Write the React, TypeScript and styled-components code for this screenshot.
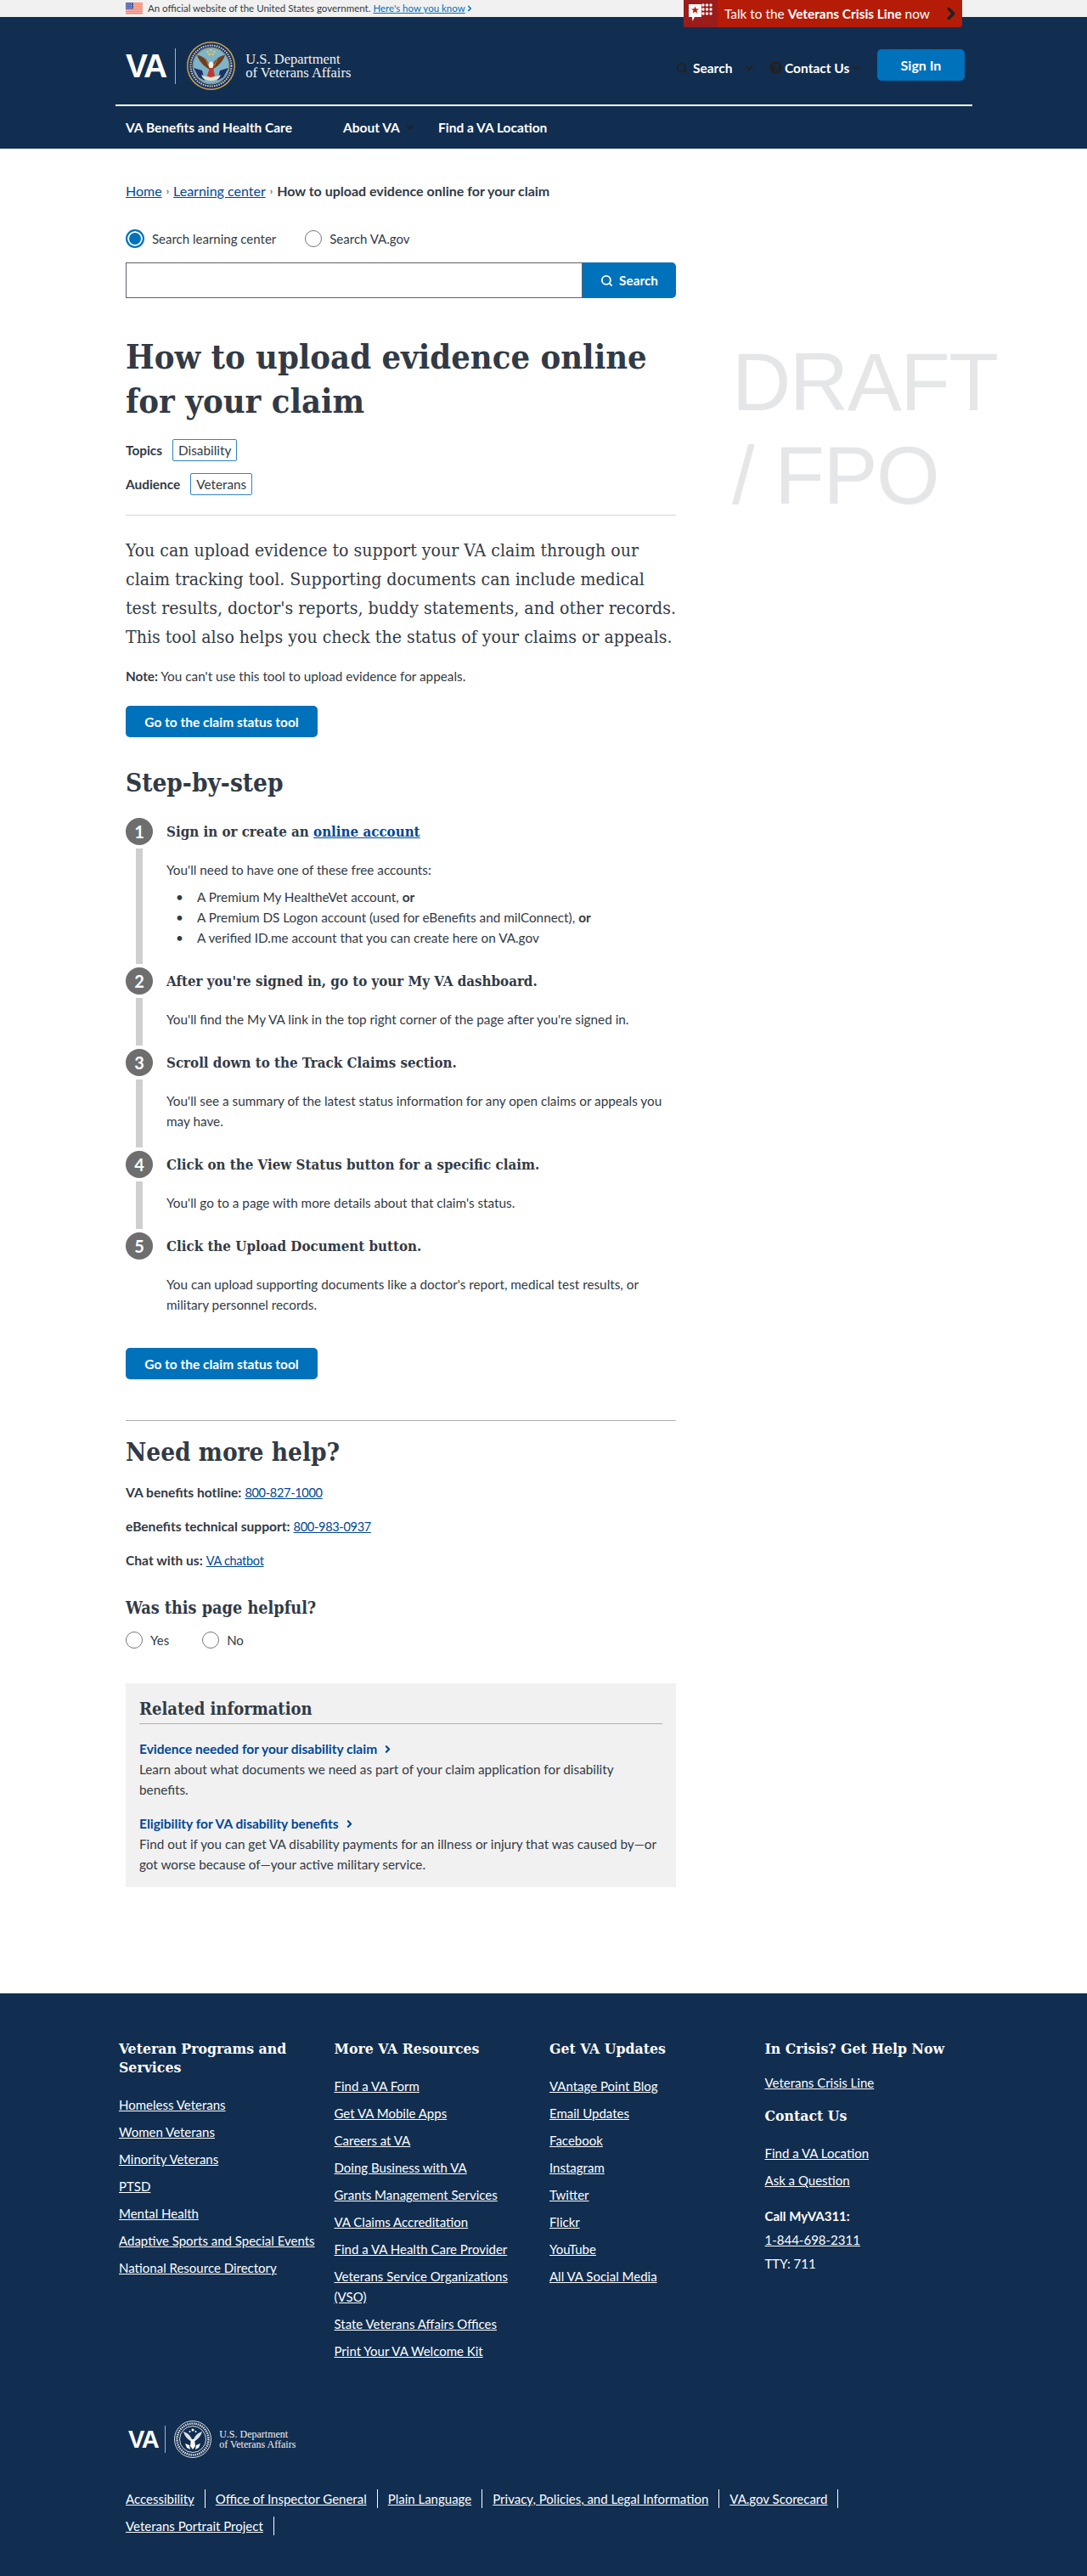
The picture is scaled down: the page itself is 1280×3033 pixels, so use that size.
import styled, { createGlobalStyle } from 'styled-components';
import { Search, ChevronDown, ChevronRight } from 'lucide-react';
import { FaQuestionCircle } from 'react-icons/fa';

const sans = `Lato, "Open Sans", sans-serif`;
const slab = `"DejaVu Serif Condensed", "DejaVu Serif", serif`;

const GlobalStyle = createGlobalStyle`
  body {
    margin: 0;
    background: #fff;
    color: #323a45;
    font-family: ${sans};
    font-size: 15.3px;
    line-height: 24px;
  }
  * { box-sizing: border-box; }
  p, h1, h2, h3, h4, ul { margin: 0; padding: 0; }
`;

const GovBanner = styled.div`
  position: relative;
  height: 20px;
  background: #f1f1f1;
  padding-left: 148px;
  display: flex;
  align-items: center;
  gap: 6px;
  font-size: 11.5px;
  line-height: 20px;
`;

const BannerLink = styled.a`
  color: #0071bb;
  text-decoration: underline;
  display: inline-flex;
  align-items: center;
  margin-left: -3px;
`;

const CrisisLine = styled.div`
  position: absolute;
  z-index: 2;
  top: 0;
  left: 805px;
  width: 328px;
  height: 32px;
  display: flex;
  align-items: center;
  background: #b51c08;
  color: #fff;
  font-size: 15.4px;
  border-radius: 0 0 3px 3px;
  overflow: hidden;

  svg.chev { color: #212121; margin-left: 14px; }
  b { font-weight: 700; }
`;

const CrisisBadge = styled.div`
  width: 40px;
  height: 32px;
  margin-right: 8px;
  background: #9b1c1c;
  display: flex;
  align-items: center;
  justify-content: center;
`;

const Masthead = styled.header`
  background: #112e51;
  height: 155px;
  color: #fff;
`;

const MastInner = styled.div`
  width: 1009px;
  margin-left: 136px;
`;

const TopRow = styled.div`
  height: 105px;
  padding: 29px 9px 0 12px;
  display: flex;
  justify-content: space-between;
  align-items: flex-start;
  border-bottom: 2px solid #fff;
`;

const LogoRow = styled.div<{ $small?: boolean }>`
  display: flex;
  align-items: center;
  height: ${(p) => (p.$small ? 44 : 57)}px;
`;

const VaMark = styled.span<{ $small?: boolean }>`
  font-family: "Liberation Sans", sans-serif;
  font-weight: 700;
  font-size: ${(p) => (p.$small ? 29 : 39)}px;
  letter-spacing: ${(p) => (p.$small ? -1.5 : -2)}px;
  line-height: 1;
  color: #fff;
`;

const LogoDivider = styled.span<{ $small?: boolean }>`
  width: 1px;
  height: ${(p) => (p.$small ? 32 : 42)}px;
  background: #aeb0b5;
  margin: 0 ${(p) => (p.$small ? 10 : 13)}px 0 ${(p) => (p.$small ? 8 : 11)}px;
`;

const LogoText = styled.div<{ $small?: boolean }>`
  font-family: "Liberation Serif", serif;
  font-size: ${(p) => (p.$small ? 12 : 16.5)}px;
  line-height: ${(p) => (p.$small ? 12 : 16)}px;
  color: #f1f1f1;
  margin-left: ${(p) => (p.$small ? 9 : 12)}px;
`;

const Utility = styled.div`
  display: flex;
  align-items: flex-start;
  margin-top: 9px;
`;

const UtilityItem = styled.div<{ $width: number }>`
  width: ${(p) => p.$width}px;
  height: 37px;
  padding-top: 6px;
  display: flex;
  align-items: center;
  font-weight: 700;
  font-size: 15.5px;
  color: #fff;
  white-space: nowrap;

  svg { color: #212121; flex: none; }
`;

const SearchIconLead = styled(Search)`
  margin-right: 6px;
`;

const ChevronTrail = styled(ChevronDown)<{ $left: number }>`
  margin-left: ${(p) => p.$left}px;
`;

const HelpIcon = styled(FaQuestionCircle)`
  margin-right: 3px;
`;

const SignIn = styled.a`
  width: 103px;
  height: 37px;
  margin-left: 22px;
  background: #0071bb;
  border-radius: 5px;
  color: #fff;
  font-weight: 700;
  font-size: 16px;
  display: flex;
  align-items: center;
  justify-content: center;
`;

const NavRow = styled.nav`
  height: 50px;
  padding-left: 12px;
  display: flex;
  align-items: center;
  font-weight: 700;
  font-size: 15.5px;
`;

const NavItem = styled.a<{ $width: number }>`
  width: ${(p) => p.$width}px;
  color: #fff;
  display: flex;
  align-items: center;
  svg { color: #212121; margin-left: 5px; }
`;

const Layout = styled.div`
  display: flex;
  padding-left: 148px;
`;

const Content = styled.main`
  width: 648px;
  padding-top: 38px;
`;

const Aside = styled.aside`
  width: 340px;
  margin: 220px 0 0 66px;
  font-family: "Liberation Sans", sans-serif;
  font-size: 96px;
  line-height: 110.4px;
  letter-spacing: -1.5px;
  color: #e5e6e8;
`;

const Breadcrumb = styled.div`
  display: flex;
  align-items: center;
  height: 24px;
  font-size: 16px;
  a { color: #004795; text-decoration: underline; }
  b { font-weight: 700; }
`;

const CrumbSep = styled.span`
  font-size: 12px;
  color: #323a45;
  padding: 0 5px;
`;

const RadioRow = styled.div<{ $gap: number; $top?: number }>`
  display: flex;
  align-items: center;
  gap: ${(p) => p.$gap}px;
  height: 24px;
  margin-top: ${(p) => p.$top ?? 0}px;
  font-size: 15px;
`;

const RadioWrap = styled.label`
  display: flex;
  align-items: center;
  gap: 9px;
`;

const RadioMark = styled.span<{ $checked?: boolean }>`
  width: ${(p) => (p.$checked ? 22 : 20)}px;
  height: ${(p) => (p.$checked ? 22 : 20)}px;
  border-radius: 50%;
  background: ${(p) => (p.$checked ? '#0071bb' : '#fff')};
  border: ${(p) => (p.$checked ? '2px solid #0071bb' : '1px solid #757575')};
  box-shadow: ${(p) => (p.$checked ? 'inset 0 0 0 2px #fff' : 'none')};
`;

const SearchRow = styled.div`
  display: flex;
  height: 42px;
  margin-top: 16px;
`;

const SearchInput = styled.div`
  width: 538px;
  border: 1.5px solid #5b616b;
`;

const SearchButton = styled.div`
  width: 110px;
  background: #0071bb;
  border-radius: 0 5px 5px 0;
  color: #fff;
  font-weight: 700;
  display: flex;
  align-items: center;
  justify-content: center;
  gap: 7px;
`;

const Title = styled.h1`
  font-family: ${slab};
  font-weight: 700;
  font-size: 39.6px;
  line-height: 52px;
  margin-top: 43px;
`;

const TagRow = styled.div<{ $top: number }>`
  display: flex;
  align-items: center;
  gap: 12px;
  margin-top: ${(p) => p.$top}px;
  font-size: 15.4px;
  b { font-weight: 700; }
`;

const Tag = styled.span`
  height: 26px;
  padding: 0 6px;
  border: 1px solid #2e85c7;
  border-radius: 2px;
  line-height: 24px;
  font-size: 15.3px;
`;

const Rule = styled.hr<{ $top: number; $color: string }>`
  border: 0;
  height: 1px;
  margin: ${(p) => p.$top}px 0 0;
  background: ${(p) => p.$color};
`;

const Lead = styled.p`
  font-family: ${slab};
  font-size: 21.1px;
  line-height: 34px;
  margin-top: 24px;
`;

const Note = styled.p`
  margin-top: 17px;
  b { font-weight: 700; }
`;

const PrimaryButton = styled.a<{ $top: number }>`
  display: flex;
  align-items: center;
  justify-content: center;
  width: 226px;
  height: 37px;
  margin-top: ${(p) => p.$top}px;
  background: #0071bb;
  border-radius: 5px;
  color: #fff;
  font-weight: 700;
  font-size: 15.5px;
`;

const SectionTitle = styled.h2<{ $top: number }>`
  font-family: ${slab};
  font-weight: 700;
  font-size: 29.5px;
  line-height: 42px;
  margin-top: ${(p) => p.$top}px;
`;

const Steps = styled.ol`
  list-style: none;
  margin: 20px 0 0;
  padding: 0;
`;

const Step = styled.li`
  display: flex;
  gap: 16px;
`;

const StepRail = styled.div`
  width: 32px;
  flex: none;
  display: flex;
  flex-direction: column;
  align-items: center;
`;

const StepNumber = styled.span`
  width: 32px;
  height: 32px;
  flex: none;
  border-radius: 50%;
  background: #6e6e6e;
  color: #fff;
  font-weight: 700;
  font-size: 20px;
  line-height: 32px;
  text-align: center;
`;

const StepBar = styled.span`
  flex: 1;
  width: 8px;
  margin: 4px 0;
  background: #cfcfcf;
`;

const StepBody = styled.div`
  flex: 1;
  padding-bottom: 23px;
`;

const StepTitle = styled.h3`
  font-family: ${slab};
  font-weight: 700;
  font-size: 16.8px;
  line-height: 32px;
  margin-bottom: 17px;
  a { color: #004795; text-decoration: underline; }
`;

const Bullets = styled.ul`
  list-style: none;
  margin-top: 8px;
  li { display: flex; }
  li::before {
    content: '•';
    width: 25px;
    padding-left: 11px;
    flex: none;
  }
  b { font-weight: 700; margin-left: 4px; }
`;

const HelpRow = styled.p<{ $top: number }>`
  margin-top: ${(p) => p.$top}px;
  font-size: 15.6px;
  b { font-weight: 700; }
  a {
    color: #004795;
    text-decoration: underline;
    font-size: 14.5px;
    line-height: 1;
    letter-spacing: -0.3px;
  }
`;

const HelpfulTitle = styled.h3`
  font-family: ${slab};
  font-weight: 700;
  font-size: 19.7px;
  line-height: 31px;
  margin: 29px 0 10px;
`;

const Related = styled.section`
  background: #f1f1f1;
  margin-top: 39px;
  padding: 15px 16px;
`;

const RelatedTitle = styled.h3`
  font-family: ${slab};
  font-weight: 700;
  font-size: 20px;
  line-height: 31px;
  padding-bottom: 1px;
  border-bottom: 1px solid #aeb0b5;
  margin-bottom: 17px;
`;

const RelatedLink = styled.a<{ $top?: number }>`
  display: flex;
  align-items: center;
  gap: 6px;
  margin-top: ${(p) => p.$top ?? 0}px;
  color: #004795;
  font-weight: 700;
  font-size: 15.5px;
`;

const Footer = styled.footer`
  margin-top: 125px;
  background: #112e51;
  color: #fff;
  padding: 54px 0 47px 140px;
  font-size: 15px;
`;

const FooterColumns = styled.div`
  display: grid;
  grid-template-columns: repeat(4, 233.5px);
  column-gap: 20px;
  height: 449px;
`;

const FooterTitle = styled.h4<{ $top?: number; $bottom?: number }>`
  font-family: ${slab};
  font-weight: 700;
  font-size: 17.5px;
  line-height: 22px;
  margin-top: ${(p) => p.$top ?? 0}px;
  margin-bottom: ${(p) => p.$bottom ?? 21}px;
`;

const FooterList = styled.ul`
  list-style: none;
  li { margin-bottom: 8px; }
  a { color: #fff; text-decoration: underline; }
`;

const FooterText = styled.p<{ $top: number }>`
  margin-top: ${(p) => p.$top}px;
  a { color: #fff; text-decoration: underline; }
  b { font-weight: 700; }
`;

const FooterLogo = styled.div`
  padding-left: 11px;
`;

const PolicyLinks = styled.ul`
  list-style: none;
  display: flex;
  flex-wrap: wrap;
  width: 1000px;
  margin: 36px 0 0 8px;
  row-gap: 8px;

  li {
    display: flex;
    align-items: center;
    line-height: 24px;
  }
  li::after {
    content: '';
    width: 1px;
    height: 22px;
    margin: 0 12px;
    background: #fff;
  }
  a { color: #fff; text-decoration: underline; }
`;

const Flag = () => (
  <svg width="20" height="14" viewBox="0 0 20 14">
    <rect width="20" height="14" fill="#fff" />
    {[0, 2, 4, 6, 8, 10, 12].map((y) => (
      <rect key={y} y={y} width="20" height="1.6" fill="#f08a72" />
    ))}
    <rect width="9" height="7.5" fill="#4d5fa8" />
    {[1.5, 3.5, 5.5].map((y) =>
      [1.5, 4, 6.5].map((x) => <circle key={`${x}-${y}`} cx={x} cy={y} r="0.6" fill="#dfe3f2" />)
    )}
  </svg>
);

const CrisisIcon = () => (
  <svg width="30" height="26" viewBox="0 0 30 26">
    <path d="M1 2h15v15h-8l-2.5 5L5 17H1z" fill="#fff" />
    <path d="M8.5 4.5l1.3 3h3.2l-2.6 2 1 3.2-2.9-2-2.9 2 1-3.2-2.6-2h3.2z" fill="#b51c08" />
    {[3, 8, 13].map((y) =>
      [18, 22.5, 27].map((x) => <circle key={`${x}-${y}`} cx={x} cy={y} r="1.7" fill="#fff" />)
    )}
  </svg>
);

const Seal = () => (
  <svg width="57" height="57" viewBox="0 0 57 57">
    <circle cx="28.5" cy="28.5" r="28.5" fill="#c9a24a" />
    <circle cx="28.5" cy="28.5" r="27" fill="#17305f" />
    <circle cx="28.5" cy="28.5" r="21.5" fill="none" stroke="#c9a24a" strokeWidth="1" />
    <circle cx="28.5" cy="28.5" r="24" fill="none" stroke="#cfd3dc" strokeWidth="2" strokeDasharray="1.5 1.2" />
    <circle cx="28.5" cy="28.5" r="21" fill="#7db4c9" />
    <path d="M8 31l10 3 3 12-7-4z" fill="#1d2f66" />
    <path d="M49 31l-10 3-3 12 7-4z" fill="#1d2f66" />
    <path d="M27 33C22 30 15 25 12 16c4 0 6 2 8 3 4 3 7 7 8 12z" fill="#6e3f1e" />
    <path d="M30 33c5-3 12-8 15-17-4 0-6 2-8 3-4 3-7 7-8 12z" fill="#6e3f1e" />
    <path d="M22 20l4 9M36 20l-4 9" stroke="#a86f3a" strokeWidth="1.4" />
    <path d="M25.5 27c0-2 1.5-3.5 3-3.5s3 1.5 3 3.5l-1 4h-4z" fill="#f4f1e6" />
    <path d="M27 31h4l2 9-4.5 3-4.5-3z" fill="#c8352b" />
    <path d="M17 39c4 2 8 3 11 3s8-1 12-3l-2 4c-3 2-6 3-9.5 3s-7-1-9.5-3z" fill="#e9e2d2" />
    {[[28.5, 10], [24.5, 12], [32.5, 12], [26.5, 15], [30.5, 15]].map(([x, y]) => (
      <circle key={`${x}-${y}`} cx={x} cy={y} r="1.3" fill="#e8c65a" />
    ))}
  </svg>
);

const SealWhite = () => (
  <svg width="44" height="44" viewBox="0 0 44 44">
    <circle cx="22" cy="22" r="21.5" fill="#112e51" stroke="#dfe1e2" />
    <circle cx="22" cy="22" r="18.5" fill="none" stroke="#dfe1e2" strokeWidth="2.5" strokeDasharray="1.5 1" />
    <circle cx="22" cy="22" r="15.5" fill="none" stroke="#dfe1e2" />
    <path d="M21 25C17 23 12 18 11 13c4 1 8 4 10 9zM23 25c4-2 9-7 10-12-4 1-8 4-10 9z" fill="#dfe1e2" />
    <path d="M20 22h4l1 8-3 4-3-4zM13 27l5 2 1 5-4-2zM31 27l-5 2-1 5 4-2z" fill="#fff" />
    <circle cx="22" cy="11" r="1.5" fill="#fff" />
    <circle cx="18.5" cy="13" r="1" fill="#fff" />
    <circle cx="25.5" cy="13" r="1" fill="#fff" />
  </svg>
);

const App = () => {
  return (
    <>
      <GlobalStyle />
      <GovBanner>
        <Flag />
        <span>An official website of the United States government.</span>
        <BannerLink>
          Here's how you know
          <ChevronRight size={10} strokeWidth={4} />
        </BannerLink>
        <CrisisLine>
          <CrisisBadge>
            <CrisisIcon />
          </CrisisBadge>
          <span>
            Talk to the <b>Veterans Crisis Line</b> now
          </span>
          <ChevronRight className="chev" size={22} strokeWidth={4} />
        </CrisisLine>
      </GovBanner>

      <Masthead>
        <MastInner>
          <TopRow>
            <LogoRow>
              <VaMark>VA</VaMark>
              <LogoDivider />
              <Seal />
              <LogoText>
                U.S. Department
                <br />
                of Veterans Affairs
              </LogoText>
            </LogoRow>
            <Utility>
              <UtilityItem $width={110}>
                <SearchIconLead size={14} strokeWidth={3} />
                Search
                <ChevronTrail $left={12} size={16} strokeWidth={3} />
              </UtilityItem>
              <UtilityItem $width={105}>
                <HelpIcon size={15} />
                Contact Us
                <ChevronTrail $left={1} size={14} strokeWidth={3} />
              </UtilityItem>
              <SignIn>Sign In</SignIn>
            </Utility>
          </TopRow>
          <NavRow>
            <NavItem $width={256}>VA Benefits and Health Care</NavItem>
            <NavItem $width={112}>
              About VA
              <ChevronDown size={14} strokeWidth={3} />
            </NavItem>
            <NavItem $width={140}>Find a VA Location</NavItem>
          </NavRow>
        </MastInner>
      </Masthead>

      <Layout>
        <Content>
          <Breadcrumb>
            <a>Home</a>
            <CrumbSep>›</CrumbSep>
            <a>Learning center</a>
            <CrumbSep>›</CrumbSep>
            <b>How to upload evidence online for your claim</b>
          </Breadcrumb>
          <RadioRow $gap={34} $top={32}>
            <RadioWrap>
              <RadioMark $checked />
              Search learning center
            </RadioWrap>
            <RadioWrap>
              <RadioMark />
              Search VA.gov
            </RadioWrap>
          </RadioRow>
          <SearchRow>
            <SearchInput />
            <SearchButton>
              <Search size={15} strokeWidth={3} />
              Search
            </SearchButton>
          </SearchRow>

          <Title>How to upload evidence online for your claim</Title>
          <TagRow $top={19}>
            <b>Topics</b>
            <Tag>Disability</Tag>
          </TagRow>
          <TagRow $top={14}>
            <b>Audience</b>
            <Tag>Veterans</Tag>
          </TagRow>
          <Rule $top={23} $color="#d6d7d9" />
          <Lead>
            You can upload evidence to support your VA claim through our claim tracking tool. Supporting
            documents can include medical test results, doctor's reports, buddy statements, and other
            records. This tool also helps you check the status of your claims or appeals.
          </Lead>
          <Note>
            <b>Note:</b> You can't use this tool to upload evidence for appeals.
          </Note>
          <PrimaryButton $top={23}>Go to the claim status tool</PrimaryButton>

          <SectionTitle $top={33}>Step-by-step</SectionTitle>
          <Steps>
            <Step>
              <StepRail>
                <StepNumber>1</StepNumber>
                <StepBar />
              </StepRail>
              <StepBody>
                <StepTitle>
                  Sign in or create an <a>online account</a>
                </StepTitle>
                <p>You'll need to have one of these free accounts:</p>
                <Bullets>
                  <li>
                    <span>
                      A Premium My HealtheVet account,<b>or</b>
                    </span>
                  </li>
                  <li>
                    <span>
                      A Premium DS Logon account (used for eBenefits and milConnect),<b>or</b>
                    </span>
                  </li>
                  <li>A verified ID.me account that you can create here on VA.gov</li>
                </Bullets>
              </StepBody>
            </Step>
            <Step>
              <StepRail>
                <StepNumber>2</StepNumber>
                <StepBar />
              </StepRail>
              <StepBody>
                <StepTitle>After you're signed in, go to your My VA dashboard.</StepTitle>
                <p>You'll find the My VA link in the top right corner of the page after you're signed in.</p>
              </StepBody>
            </Step>
            <Step>
              <StepRail>
                <StepNumber>3</StepNumber>
                <StepBar />
              </StepRail>
              <StepBody>
                <StepTitle>Scroll down to the Track Claims section.</StepTitle>
                <p>
                  You'll see a summary of the latest status information for any open claims or appeals you
                  may have.
                </p>
              </StepBody>
            </Step>
            <Step>
              <StepRail>
                <StepNumber>4</StepNumber>
                <StepBar />
              </StepRail>
              <StepBody>
                <StepTitle>Click on the View Status button for a specific claim.</StepTitle>
                <p>You'll go to a page with more details about that claim's status.</p>
              </StepBody>
            </Step>
            <Step>
              <StepRail>
                <StepNumber>5</StepNumber>
              </StepRail>
              <StepBody>
                <StepTitle>Click the Upload Document button.</StepTitle>
                <p>
                  You can upload supporting documents like a doctor's report, medical test results, or
                  military personnel records.
                </p>
              </StepBody>
            </Step>
          </Steps>
          <PrimaryButton $top={16}>Go to the claim status tool</PrimaryButton>

          <Rule $top={48} $color="#aeb0b5" />
          <SectionTitle $top={16}>Need more help?</SectionTitle>
          <HelpRow $top={14}>
            <b>VA benefits hotline:</b> <a>800-827-1000</a>
          </HelpRow>
          <HelpRow $top={16}>
            <b>eBenefits technical support:</b> <a>800-983-0937</a>
          </HelpRow>
          <HelpRow $top={16}>
            <b>Chat with us:</b> <a>VA chatbot</a>
          </HelpRow>
          <HelpfulTitle>Was this page helpful?</HelpfulTitle>
          <RadioRow $gap={39}>
            <RadioWrap>
              <RadioMark />
              Yes
            </RadioWrap>
            <RadioWrap>
              <RadioMark />
              No
            </RadioWrap>
          </RadioRow>

          <Related>
            <RelatedTitle>Related information</RelatedTitle>
            <RelatedLink>
              Evidence needed for your disability claim
              <ChevronRight size={13} strokeWidth={4} />
            </RelatedLink>
            <p>Learn about what documents we need as part of your claim application for disability benefits.</p>
            <RelatedLink $top={16}>
              Eligibility for VA disability benefits
              <ChevronRight size={13} strokeWidth={4} />
            </RelatedLink>
            <p>
              Find out if you can get VA disability payments for an illness or injury that was caused by—or
              got worse because of—your active military service.
            </p>
          </Related>
        </Content>
        <Aside>DRAFT / FPO</Aside>
      </Layout>

      <Footer>
        <FooterColumns>
          <div>
            <FooterTitle>Veteran Programs and Services</FooterTitle>
            <FooterList>
              {['Homeless Veterans', 'Women Veterans', 'Minority Veterans', 'PTSD', 'Mental Health', 'Adaptive Sports and Special Events', 'National Resource Directory'].map((l) => (
                <li key={l}><a>{l}</a></li>
              ))}
            </FooterList>
          </div>
          <div>
            <FooterTitle>More VA Resources</FooterTitle>
            <FooterList>
              {['Find a VA Form', 'Get VA Mobile Apps', 'Careers at VA', 'Doing Business with VA', 'Grants Management Services', 'VA Claims Accreditation', 'Find a VA Health Care Provider', 'Veterans Service Organizations (VSO)', 'State Veterans Affairs Offices', 'Print Your VA Welcome Kit'].map((l) => (
                <li key={l}><a>{l}</a></li>
              ))}
            </FooterList>
          </div>
          <div>
            <FooterTitle>Get VA Updates</FooterTitle>
            <FooterList>
              {['VAntage Point Blog', 'Email Updates', 'Facebook', 'Instagram', 'Twitter', 'Flickr', 'YouTube', 'All VA Social Media'].map((l) => (
                <li key={l}><a>{l}</a></li>
              ))}
            </FooterList>
          </div>
          <div>
            <FooterTitle $bottom={17}>In Crisis? Get Help Now</FooterTitle>
            <FooterText $top={0}><a>Veterans Crisis Line</a></FooterText>
            <FooterTitle $top={16}>Contact Us</FooterTitle>
            <FooterList>
              <li><a>Find a VA Location</a></li>
              <li><a>Ask a Question</a></li>
            </FooterList>
            <FooterText $top={18}><b>Call MyVA311:</b></FooterText>
            <FooterText $top={4}><a>1-844-698-2311</a></FooterText>
            <FooterText $top={4}>TTY: 711</FooterText>
          </div>
        </FooterColumns>
        <FooterLogo>
          <LogoRow $small>
            <VaMark $small>VA</VaMark>
            <LogoDivider $small />
            <SealWhite />
            <LogoText $small>
              U.S. Department
              <br />
              of Veterans Affairs
            </LogoText>
          </LogoRow>
        </FooterLogo>
        <PolicyLinks>
          {['Accessibility', 'Office of Inspector General', 'Plain Language', 'Privacy, Policies, and Legal Information', 'VA.gov Scorecard', 'Veterans Portrait Project'].map((l) => (
            <li key={l}><a>{l}</a></li>
          ))}
        </PolicyLinks>
      </Footer>
    </>
  );
};

export default App;
